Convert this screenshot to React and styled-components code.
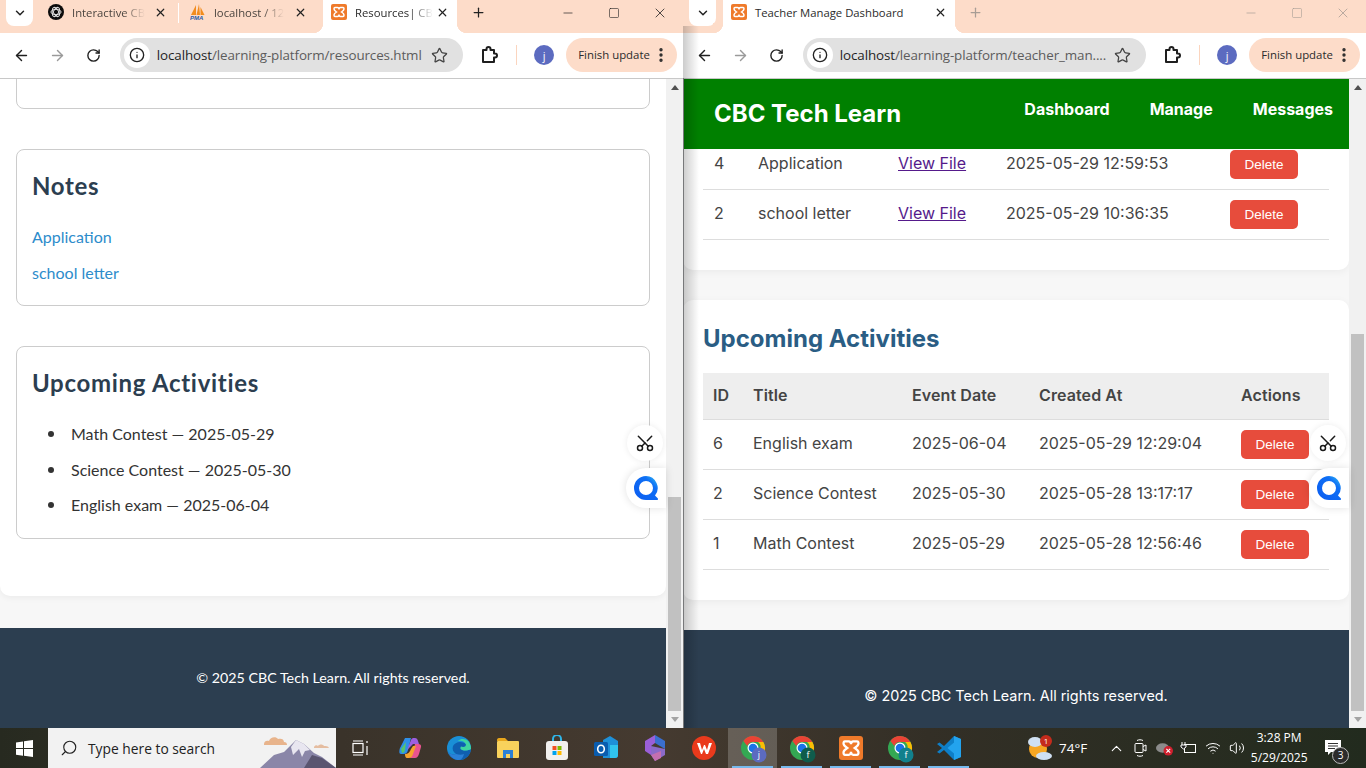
import React from "react";
import styled, { createGlobalStyle } from "styled-components";
import {
  ArrowLeft,
  ArrowRight,
  ChevronDown,
  ChevronUp,
  Info,
  Minus,
  MoreVertical,
  Plus,
  RotateCw,
  Scissors,
  Search,
  Square,
  Star,
  Volume2,
  Wifi,
  X,
} from "lucide-react";

const GlobalStyle = createGlobalStyle`
  html, body {
    margin: 0;
    padding: 0;
    overflow: hidden;
  }
  * {
    box-sizing: border-box;
  }
`;

const Desktop = styled.div`
  width: 1366px;
  height: 768px;
  display: flex;
  flex-direction: column;
  overflow: hidden;
`;

const Windows = styled.div`
  display: flex;
  height: 728px;
`;

const Window = styled.div`
  position: relative;
  width: 683px;
  height: 728px;
  display: flex;
  flex-direction: column;
  background: #fff;

  ${(p) =>
    p.$shaded &&
    `
    &::after {
      content: "";
      position: absolute;
      left: 0;
      top: 26px;
      bottom: 0;
      width: 16px;
      background: linear-gradient(90deg, rgba(0,0,0,.2), rgba(0,0,0,0));
      pointer-events: none;
      z-index: 5;
    }
    &::before {
      content: "";
      position: absolute;
      left: 0;
      top: 78px;
      bottom: 0;
      width: 1px;
      background: #77787a;
      z-index: 6;
    }
  `}
`;

/* browser chrome */
const TabStrip = styled.div`
  height: 33px;
  display: flex;
  align-items: flex-start;
  background: #fddcc9;
  font-family: "Open Sans", "Noto Sans", sans-serif;
  font-size: 11.3px;
  color: #3b3b3b;
`;

const TabMenu = styled.div`
  width: 27px;
  height: 26px;
  margin: 0 7px 0 6px;
  background: #fff;
  border-radius: 0 0 8px 8px;
  display: flex;
  align-items: center;
  justify-content: center;
  color: #222;
`;

const Tab = styled.div`
  position: relative;
  width: ${(p) => p.$width}px;
  height: ${(p) => (p.$active ? 33 : 26)}px;
  padding: 0 8px ${(p) => (p.$active ? 9 : 2)}px 8px;
  display: flex;
  align-items: center;
  background: ${(p) => (p.$active ? "#fff" : "transparent")};
  color: ${(p) => (p.$active ? "#2b2b2b" : "#4a443f")};

  svg {
    flex: none;
  }

  ${(p) =>
    p.$active &&
    `
    &::before, &::after {
      content: "";
      position: absolute;
      bottom: 0;
      width: 10px;
      height: 10px;
    }
    &::before {
      left: -10px;
      background: radial-gradient(circle at 0 0, #fddcc9 10px, #fff 10.5px);
    }
    &::after {
      right: -10px;
      background: radial-gradient(circle at 100% 0, #fddcc9 10px, #fff 10.5px);
    }
  `}
`;

const TabTitle = styled.span`
  flex: none;
  margin: 0 auto 0 8px;
  white-space: nowrap;
  ${(p) =>
    p.$fade &&
    `
    -webkit-mask-image: linear-gradient(90deg, #000 70%, transparent 100%);
    mask-image: linear-gradient(90deg, #000 70%, transparent 100%);
  `}
`;

const TabSeparator = styled.div`
  width: 1px;
  height: 20px;
  margin: 3px 3px 0;
  background: #fff;
`;

const TabGap = styled.div`
  width: ${(p) => p.$width}px;
`;

const NewTab = styled.div`
  width: 18px;
  height: 24px;
  margin-left: ${(p) => p.$gap}px;
  display: flex;
  align-items: center;
  justify-content: center;
  color: ${(p) => (p.$dim ? "#a89d95" : "#222")};
`;

const WindowControls = styled.div`
  margin-left: auto;
  display: flex;
  color: ${(p) => (p.$dim ? "#a89d95" : "#222")};
`;

const WindowControl = styled.div`
  width: 46px;
  height: 25px;
  display: flex;
  align-items: center;
  justify-content: center;
`;

const Toolbar = styled.div`
  height: 46px;
  padding: 5px 6px 6px 4px;
  display: flex;
  align-items: center;
  background: #fff;
  border-bottom: 1px solid #c8c8c8;
  font-family: "Open Sans", "Noto Sans", sans-serif;
`;

const ToolButton = styled.div`
  width: 36px;
  height: 34px;
  display: flex;
  align-items: center;
  justify-content: center;
  color: ${(p) => (p.$dim ? "#9a9a9a" : "#1f1f1f")};
`;

const AddressBar = styled.div`
  width: 344px;
  height: 34px;
  margin: 0 8px;
  padding: 0 15px 0 4px;
  display: flex;
  align-items: center;
  background: #e1e1e1;
  border-radius: 17px;
  font-size: 13.4px;
  color: #5c5c5c;
`;

const SiteInfo = styled.div`
  width: 26px;
  height: 26px;
  margin-right: 7px;
  border-radius: 50%;
  background: #fff;
  display: flex;
  align-items: center;
  justify-content: center;
  color: #222;
`;

const Url = styled.div`
  flex: 1;
  white-space: nowrap;
  letter-spacing: -0.1px;

  b {
    font-weight: 400;
    color: #1f1f1f;
  }
`;

const ToolDivider = styled.div`
  width: 1px;
  height: 20px;
  margin: 0 17px 0 9px;
  background: #fbd5bf;
`;

const Avatar = styled.div`
  width: 20px;
  height: 20px;
  margin-right: 12px;
  border-radius: 50%;
  background: #5c6bc0;
  color: #fff;
  font-size: 11px;
  display: flex;
  align-items: center;
  justify-content: center;
`;

const UpdatePill = styled.div`
  width: 111px;
  height: 34px;
  padding: 0 7px 1px 12px;
  display: flex;
  align-items: center;
  justify-content: space-between;
  border-radius: 17px;
  background: #fddcc9;
  font-size: 11.4px;
  color: #2b2b2b;
  white-space: nowrap;
`;

/* page + scrollbar */
const PageArea = styled.div`
  position: relative;
  flex: 1;
  min-height: 0;
  display: flex;
`;

const Viewport = styled.div`
  flex: 1;
  min-width: 0;
  display: flex;
  flex-direction: column;
  overflow: hidden;
  background: #f7f7f7;
`;

const Scrollbar = styled.div`
  width: 17px;
  padding: 0 2px;
  display: flex;
  flex-direction: column;
  align-items: stretch;
  background: #f1f1f1;
`;

const ScrollArrow = styled.div`
  height: 17px;
  flex: none;
  display: flex;
  align-items: center;
  justify-content: center;

  &::before {
    content: "";
    border-left: 4px solid transparent;
    border-right: 4px solid transparent;
    ${(p) => (p.$down ? "border-top: 5px solid #a3a3a3;" : "border-bottom: 5px solid #505050;")}
  }
`;

const ScrollTrack = styled.div`
  flex: 1;
  display: flex;
  flex-direction: column;
  justify-content: flex-end;
`;

const ScrollThumb = styled.div`
  height: ${(p) => p.$height}px;
  background: #c1c1c1;
`;

const ClipperBubble = styled.div`
  position: absolute;
  top: 346px;
  right: 20px;
  width: 36px;
  height: 36px;
  border-radius: 50%;
  background: #fff;
  box-shadow: 0 0 6px rgba(0, 0, 0, 0.08);
  display: flex;
  align-items: center;
  justify-content: center;
  color: #1a1a1a;
  z-index: 3;
`;

const ClipperIcon = styled(Scissors)`
  transform: rotate(-90deg);
`;

const ChatBubble = styled.div`
  position: absolute;
  top: 389px;
  right: 17px;
  width: 40px;
  height: 40px;
  border-radius: 20px 0 0 20px;
  background: #fff;
  box-shadow: 0 0 8px rgba(0, 0, 0, 0.12);
  display: flex;
  align-items: center;
  justify-content: center;
  z-index: 3;
`;

/* resources page */
const ResourcesMain = styled.div`
  height: 517px;
  margin-bottom: 32px;
  padding: 0 16px;
  flex: none;
  display: flex;
  flex-direction: column;
  gap: 40px;
  background: #fff;
  border-radius: 0 0 10px 10px;
  box-shadow: 0 2px 6px rgba(0, 0, 0, 0.05);
  font-family: "Lato", "Noto Sans", sans-serif;
  font-size: 16px;
  color: #333;
`;

const Panel = styled.section`
  flex: none;
  padding: 20px 15px;
  border: 1px solid #ccc;
  border-radius: 8px;
`;

const ClippedPanel = styled(Panel)`
  height: 50px;
  margin-top: -20px;
`;

const PanelTitle = styled.h2`
  margin: 0 0 23px;
  font-size: 24px;
  line-height: 32px;
  font-weight: 700;
  letter-spacing: 0.7px;
  color: #2c3e50;
`;

const NoteLinks = styled.div`
  display: flex;
  flex-direction: column;
  gap: 12px;
  line-height: 24px;
`;

const NoteLink = styled.a`
  color: #2d8ccb;
  text-decoration: none;
`;

const ActivityList = styled.ul`
  margin: 2px 0 1px;
  padding: 0 0 0 39px;
  display: flex;
  flex-direction: column;
  gap: 11.5px;
  line-height: 24px;
  list-style: none;
`;

const ActivityItem = styled.li`
  position: relative;

  &::before {
    content: "";
    position: absolute;
    left: -23px;
    top: 9px;
    width: 6px;
    height: 6px;
    border-radius: 50%;
    background: #333;
  }
`;

const Footer = styled.footer`
  flex: 1;
  display: flex;
  justify-content: center;
  align-items: ${(p) => (p.$inter ? "flex-start" : "center")};
  margin-top: ${(p) => (p.$inter ? 30 : 0)}px;
  padding-top: ${(p) => (p.$inter ? 56 : 0)}px;
  background: #2c3e50;
  color: #fff;
  font-family: ${(p) => (p.$inter ? '"Inter"' : '"Lato"')}, sans-serif;
  font-size: ${(p) => (p.$inter ? "14.4px" : "14.25px")};
  line-height: 20px;
`;

/* teacher page */
const TeacherPage = styled(Viewport)`
  font-family: "Inter", sans-serif;
  font-size: 16px;
  color: #444;
`;

const Header = styled.header`
  position: relative;
  z-index: 2;
  flex: none;
  height: 70px;
  padding: 0 16px 0 31px;
  display: flex;
  align-items: center;
  justify-content: space-between;
  background: #008000;
  color: #fff;
`;

const Brand = styled.div`
  margin-top: -2px;
  font-size: 24px;
  font-weight: 700;
`;

const Nav = styled.nav`
  display: flex;
  gap: 40px;
  margin-top: -11px;
  font-weight: 700;
`;

const Card = styled.section`
  flex: none;
  padding: ${(p) => p.$top}px 20px 30px;
  margin-top: ${(p) => p.$offset}px;
  background: #fff;
  border-radius: 10px;
  box-shadow: 0 2px 8px rgba(0, 0, 0, 0.05);
`;

const CardTitle = styled.h2`
  margin: 0 0 19px;
  font-size: 24px;
  line-height: 30px;
  font-weight: 700;
  color: #2a5d84;
`;

const Table = styled.table`
  width: 626px;
  table-layout: fixed;
  border-collapse: separate;
  border-spacing: 0;
  white-space: nowrap;
`;

const HeadCell = styled.th`
  height: 47px;
  padding: 0 ${(p) => p.$pad}px 2px;
  text-align: left;
  font-weight: 600;
  letter-spacing: 0.1px;
  background: #eee;
  border-bottom: 1px solid #ddd;
`;

const Cell = styled.td`
  height: 50px;
  padding: 0 ${(p) => p.$pad}px 3px;
  border-bottom: 1px solid #ddd;
  vertical-align: middle;
`;

const FileLink = styled.a`
  color: #551a8b;
  text-decoration: underline;
`;

const DeleteButton = styled.button`
  width: 68px;
  height: 29px;
  margin: 1.5px 0 -1.5px;
  padding: 0;
  border: none;
  border-radius: 5px;
  background: #e74c3c;
  color: #fff;
  font-family: "Liberation Sans", sans-serif;
  font-size: 13.5px;
  display: block;
`;

/* taskbar */
const Taskbar = styled.div`
  height: 40px;
  display: flex;
  align-items: stretch;
  background: linear-gradient(90deg, #272a20 0%, #3a332a 25%, #453a30 48%, #332f26 68%, #222b1e 100%);
  color: #fff;
  font-family: "Open Sans", "Noto Sans", sans-serif;
`;

const StartButton = styled.div`
  width: 48px;
  display: flex;
  align-items: center;
  justify-content: center;
`;

const SearchBox = styled.div`
  width: 288px;
  padding-left: 12px;
  display: flex;
  align-items: center;
  background: #f2f2f2;
  color: #222;
  font-size: 13.8px;
  overflow: hidden;

  span {
    margin-left: 10px;
    white-space: nowrap;
  }
  svg:last-child {
    margin-left: auto;
  }
`;

const SearchGlass = styled(Search)`
  transform: scaleX(-1);
`;

const TaskSlot = styled.div`
  position: relative;
  width: 49px;
  flex: none;
  display: flex;
  align-items: center;
  justify-content: center;
  background: ${(p) => (p.$active ? "rgba(255,255,255,.2)" : "transparent")};

  ${(p) =>
    p.$running &&
    `
    &::after {
      content: "";
      position: absolute;
      left: 4px;
      right: 4px;
      bottom: 0;
      height: 2px;
      background: #76b9ed;
    }
  `}
`;

const TrayArea = styled.div`
  flex: 1;
  display: flex;
  align-items: center;
`;

const Weather = styled.div`
  margin-left: 54px;
  display: flex;
  align-items: center;
  gap: 5px;
  font-size: 13.5px;
`;

const TrayIcons = styled.div`
  margin-left: 21px;
  display: flex;
  align-items: center;
  gap: 7px;
`;

const TrayIcon = styled.div`
  width: 17px;
  display: flex;
  justify-content: center;
`;

const Clock = styled.div`
  width: 64px;
  margin-left: 2px;
  text-align: center;
  font-size: 12px;
  line-height: 20px;
`;

const Notifications = styled.div`
  position: relative;
  margin-left: 7px;
  width: 30px;
  display: flex;
  justify-content: center;
`;

const NotificationBadge = styled.div`
  position: absolute;
  right: -1px;
  bottom: -8px;
  width: 17px;
  height: 17px;
  border-radius: 50%;
  background: #2c2c2c;
  border: 1px solid #bbb;
  font-size: 10px;
  line-height: 15px;
  text-align: center;
`;

const ChromeSvg = styled.svg`
  overflow: visible;
`;

const OpenAiIcon = () => (
  <svg width="16" height="16" viewBox="0 0 16 16">
    <circle cx="8" cy="8" r="8" fill="#0c0c0c" />
    <g fill="none" stroke="#ddd" strokeWidth="1">
      <ellipse cx="8" cy="8" rx="5" ry="2.6" />
      <ellipse cx="8" cy="8" rx="5" ry="2.6" transform="rotate(60 8 8)" />
      <ellipse cx="8" cy="8" rx="5" ry="2.6" transform="rotate(120 8 8)" />
    </g>
  </svg>
);

const PmaIcon = () => (
  <svg width="16" height="16" viewBox="0 0 16 16">
    <path d="M1 11 6 1v10zM6.500 11 9 0l1 11zM10.500 11V3l4 8z" fill="#f28c1e" />
    <text x="0" y="16" fontFamily="Liberation Sans" fontSize="6" fontWeight="700" fontStyle="italic" fill="#2a5aa8">PMA</text>
  </svg>
);

const XamppIcon = ({ size = 16 }) => (
  <svg width={size} height={size} viewBox="0 0 16 16">
    <rect width="16" height="16" rx="2" fill="#ef7a2a" />
    <path
      d="M4 3.500h2.500c1 0 1.500 1 1.500 2 0-1 .5-2 1.500-2H12c.8 0 1 .8 1 1.500S12 7 10.500 8c1.500 1 2.500 2.300 2.500 3s-.2 1.500-1 1.500H9.500c-1 0-1.500-1-1.500-2 0 1-.5 2-1.500 2H4c-.8 0-1-.8-1-1.500S4 9 5.500 8C4 7 3 5.700 3 5s.2-1.500 1-1.500z"
      fill="none"
      stroke="#fff"
      strokeWidth="1.500"
    />
  </svg>
);

const ExtensionIcon = () => (
  <svg width="18" height="18" viewBox="0 0 18 18" fill="none" stroke="#1f1f1f" strokeWidth="2" strokeLinejoin="round">
    <path d="M3 4h3.500V3a2 2 0 0 1 4 0v1H14v3.500h1a2 2 0 0 1 0 4h-1V16H3z" />
  </svg>
);

const ChatRing = ({ id }) => (
  <svg width="24" height="24" viewBox="0 0 24 24">
    <defs>
      <linearGradient id={id} x1="0" y1="1" x2="1" y2="0">
        <stop offset="0" stopColor="#0b5cf0" />
        <stop offset="0.7" stopColor="#0f6ff5" />
        <stop offset="1" stopColor="#35c6f4" />
      </linearGradient>
    </defs>
    <path
      d="M12 0a12 12 0 1 0 0 24h11a1 1 0 0 0 .7-1.700l-2.700-2.800A12 12 0 0 0 12 0zm0 5a7 7 0 1 1 0 14 7 7 0 0 1 0-14z"
      fill={`url(#${id})`}
      fillRule="evenodd"
    />
  </svg>
);

const WindowsLogo = () => (
  <svg width="17" height="17" viewBox="0 0 17 17" fill="#fff">
    <path d="M0 2.400 7 1.400v6.700H0zM8 1.300 17 0v8.100H8zM0 9h7v6.700l-7-1zM8 9h9v8l-9-1.300z" />
  </svg>
);

const SearchArt = () => (
  <svg width="76" height="39" viewBox="0 0 76 39">
    <path d="M4 15c0-3 3-4 5-3 1-4 7-5 9-2 3-1 6 0 6 3 2 0 3 1 3 3H4z" fill="#e8b48c" />
    <path d="M54 18c1-2 3-2 4-1 1-2 5-2 6 0 2 0 4 0 5 2H54z" fill="#e5bda0" />
    <path d="M0 39 14 26l10-3 12-12 8 4 10 9 8 4 14 11z" fill="#8a86a8" />
    <path d="M36 11l8 4 6 6-5 1-3 6-3-8-6 6-2-8z" fill="#e8e6f0" />
    <path d="M44 39l8-13 10 3 14 10z" fill="#5a5570" />
  </svg>
);

const TaskView = () => (
  <svg width="18" height="16" viewBox="0 0 18 16" fill="none" stroke="#fff" strokeWidth="1.200">
    <rect x="1" y="3.500" width="10" height="9" />
    <path d="M1 1h10M1 15h10M15 1v2M15 6v9" />
  </svg>
);

const CopilotIcon = () => (
  <svg width="24" height="24" viewBox="0 0 24 24">
    <path d="M7 2h6l-3 12c-.6 2.500-2 4-4 4H3C1 18 1 15 2 12z" fill="#2f8fe8" />
    <path d="M11 22H17c2 0 3-1.500 4-4l2-7c.6-2-1-3-2.500-3H17l-3 10c-.6 2-1.500 4-3 4z" fill="#e9548f" />
    <path d="M9 14 13 4c.6-1.500 1.500-2 3-2h1c1.500 0 2.500 1 3 3l1 3h-6z" fill="#9c5fe0" />
    <path d="M7 18c3 0 5-2 6-5l2-3h3l-3 8c-.8 2.500-2 4-4 4H9c-1.500 0-2-2-2-4z" fill="#f7a42c" />
    <path d="M3 13 8 6 7 14c-.4 2-1.500 3-3 3z" fill="#58c46c" />
  </svg>
);

const EdgeIcon = () => (
  <svg width="24" height="24" viewBox="0 0 24 24">
    <circle cx="12" cy="12" r="12" fill="#1a8fd6" />
    <path d="M24 13c-.4 6-5 11-12 11-5 0-9-3-11-8 2 2 5 3 8 2-3-2-4-5-3-8 1-2 4-4 7-4 5 0 7 3 7 5 0 2-2 3-4 3 1 1 3 1 8-1z" fill="#0f5fb0" />
    <path d="M24 13c-2 1.500-6 2-9 1-2-.7-2-2-1-3.500 2 1 5 .5 5-2C18 5 14 4 11 5c3-3 8-2 10 0 2 2 3 5 3 8z" fill="#3fd4a0" />
    <path d="M12 24c-4 0-8-2-11-8 2 2 5 3 8 2 3 1 6 1 8 0-1 4-3 6-5 6z" fill="#2a80d8" />
  </svg>
);

const FolderIcon = () => (
  <svg width="24" height="22" viewBox="0 0 24 22">
    <path d="M1 3c0-1 .5-2 2-2h6l3 3H1z" fill="#e8a61c" />
    <rect x="1" y="4" width="22" height="17" rx="1" fill="#f9d25c" />
    <path d="M7 21v-8h10v8h-3v-4h-4v4z" fill="#2b80d4" />
  </svg>
);

const StoreIcon = () => (
  <svg width="24" height="26" viewBox="0 0 24 26">
    <path d="M8 6V4a4 4 0 0 1 8 0v2" fill="none" stroke="#2fb5e8" strokeWidth="2" />
    <rect x="1" y="6" width="22" height="19" rx="3" fill="#f2f0ee" />
    <rect x="7.500" y="11" width="4" height="4" fill="#f25022" />
    <rect x="12.500" y="11" width="4" height="4" fill="#7fba00" />
    <rect x="7.500" y="16" width="4" height="4" fill="#00a4ef" />
    <rect x="12.500" y="16" width="4" height="4" fill="#ffb900" />
  </svg>
);

const OutlookIcon = () => (
  <svg width="24" height="24" viewBox="0 0 24 24">
    <path d="M9 4 16 0l8 5v14c0 2-1 3-3 3H9z" fill="#1e90d8" />
    <path d="M16 9h8v10c0 2-1 3-3 3h-5z" fill="#30c4ee" />
    <rect x="0" y="6" width="14" height="14" rx="1.500" fill="#0a5cae" />
    <ellipse cx="7" cy="13" rx="3.300" ry="3.800" fill="none" stroke="#fff" strokeWidth="1.600" />
  </svg>
);

const Copilot365Icon = () => (
  <svg width="22" height="26" viewBox="0 0 22 26">
    <path d="M11 0 21 6v8L11 8z" fill="#3a6fd0" />
    <path d="M1 6 11 0v8l-4 3v9l-6-4z" fill="#9a5fd8" />
    <path d="M7 11l14 3v6l-10 6-4-6z" fill="#8b6ac9" />
    <path d="M7 20l10-4v7l-6 3z" fill="#c46fb0" />
  </svg>
);

const WpsIcon = () => (
  <svg width="24" height="24" viewBox="0 0 24 24">
    <circle cx="12" cy="12" r="12" fill="#ea3a1c" />
    <path d="M5 7h3l2 7 2-5h1l2 5 2-7h3l-4 11h-2l-2-5-2 5H9z" fill="#fff" />
  </svg>
);

const ChromeIcon = ({ badge, letter }) => (
  <ChromeSvg width="24" height="24" viewBox="0 0 24 24">
    <circle cx="12" cy="12" r="12" fill="#34a853" />
    <path d="M12 0a12 12 0 0 1 10.400 6H12a6 6 0 0 0-5.700 4L2.400 5A12 12 0 0 1 12 0z" fill="#ea4335" />
    <path d="M22.400 6A12 12 0 0 1 12 24l5-8a6 6 0 0 0 0-10z" fill="#fbbc04" />
    <circle cx="12" cy="12" r="5.500" fill="#fff" />
    <circle cx="12" cy="12" r="4.300" fill="#1a73e8" />
    <circle cx="18" cy="19" r="7.500" fill={badge} />
    <text x="18" y="22" fontFamily="Open Sans" fontSize="9" fill="#fff" textAnchor="middle">{letter}</text>
  </ChromeSvg>
);

const VsCodeIcon = () => (
  <svg width="24" height="24" viewBox="0 0 24 24">
    <path d="M17 0 24 3v18l-7 3L7 14l-4.500 3.500L0 16l5-4-5-4 2.500-1.500L7 10z" fill="#0e7fc8" />
    <path d="M17 0 24 3v18l-7 3zM17 6.500 10.500 12l6.500 5.500z" fill="#23a3ee" fillRule="evenodd" />
  </svg>
);

const WeatherIcon = () => (
  <svg width="27" height="26" viewBox="0 0 27 26">
    <circle cx="11" cy="14" r="9" fill="#f6a623" />
    <ellipse cx="8" cy="7" rx="7" ry="5" fill="#cfe0f2" />
    <ellipse cx="17" cy="21" rx="8" ry="4" fill="#cfe0f2" />
    <circle cx="19" cy="6" r="6" fill="#c42b1c" />
    <text x="19" y="9" fontFamily="Open Sans" fontSize="8" fill="#fff" textAnchor="middle">1</text>
  </svg>
);

const MeetIcon = () => (
  <svg width="13" height="20" viewBox="0 0 13 20" fill="none" stroke="#fff" strokeWidth="1">
    <rect x="1" y="5.500" width="8" height="9" rx="1" />
    <path d="M9 8.500l3-1.500v6l-3-1.500M3 2.500c2-1 4-1 6 0M3 17.500c2 1 4 1 6 0" />
  </svg>
);

const CloudError = () => (
  <svg width="18" height="16" viewBox="0 0 18 16">
    <ellipse cx="7" cy="8" rx="7" ry="5" fill="#8b8b8b" />
    <circle cx="13" cy="11" r="5" fill="#d0202e" />
    <path d="M11 9l4 4M15 9l-4 4" stroke="#fff" strokeWidth="1.200" />
  </svg>
);

const BatteryPlug = () => (
  <svg width="17" height="14" viewBox="0 0 17 14" fill="none" stroke="#fff" strokeWidth="1">
    <rect x="4.500" y="3.500" width="11" height="8" />
    <path d="M2 1v3M5 1v3M1 4h5v2L3.500 8 1 6z" fill="#222" />
  </svg>
);

const NotificationIcon = () => (
  <svg width="16" height="16" viewBox="0 0 16 16">
    <path d="M0 0h16v12H6l-3 3v-3H0z" fill="#fff" />
    <path d="M3 3.500h10M3 6h10M3 8.500h7" stroke="#333" strokeWidth="1" />
  </svg>
);

const BrowserChrome = ({ tabs, plusGap, controlsDim, url, host = "localhost" }) => (
  <>
    <TabStrip>
      <TabMenu>
        <ChevronDown size={14} strokeWidth={2.5} />
      </TabMenu>
      {tabs.map((tab) => (
        <React.Fragment key={tab.title}>
          <Tab $width={tab.width} $active={tab.active}>
            {tab.icon}
            <TabTitle $fade={tab.fade}>{tab.title}</TabTitle>
            <X size={13} strokeWidth={2.2} color="#222" />
          </Tab>
          {tab.divider && <TabSeparator />}
          {tab.gap && <TabGap $width={tab.gap} />}
        </React.Fragment>
      ))}
      <NewTab $gap={plusGap} $dim={controlsDim}>
        <Plus size={15} strokeWidth={2} />
      </NewTab>
      <WindowControls $dim={controlsDim}>
        <WindowControl><Minus size={14} strokeWidth={1.2} /></WindowControl>
        <WindowControl><Square size={12} strokeWidth={1.2} /></WindowControl>
        <WindowControl><X size={16} strokeWidth={1.2} /></WindowControl>
      </WindowControls>
    </TabStrip>
    <Toolbar>
      <ToolButton><ArrowLeft size={17} strokeWidth={2} /></ToolButton>
      <ToolButton $dim><ArrowRight size={17} strokeWidth={2} /></ToolButton>
      <ToolButton><RotateCw size={15} strokeWidth={2.2} /></ToolButton>
      <AddressBar>
        <SiteInfo><Info size={16} strokeWidth={2} /></SiteInfo>
        <Url><b>{host}</b>{url}</Url>
        <Star size={17} strokeWidth={1.8} color="#444" />
      </AddressBar>
      <ToolButton><ExtensionIcon /></ToolButton>
      <ToolDivider />
      <Avatar>j</Avatar>
      <UpdatePill>
        Finish update
        <MoreVertical size={18} strokeWidth={2.5} />
      </UpdatePill>
    </Toolbar>
  </>
);

const noteRows = [
  { id: 4, title: "Application", date: "2025-05-29 12:59:53" },
  { id: 2, title: "school letter", date: "2025-05-29 10:36:35" },
];

const activityRows = [
  { id: 6, title: "English exam", event: "2025-06-04", created: "2025-05-29 12:29:04" },
  { id: 2, title: "Science Contest", event: "2025-05-30", created: "2025-05-28 13:17:17" },
  { id: 1, title: "Math Contest", event: "2025-05-29", created: "2025-05-28 12:56:46" },
];

const leftTabs = [
  { title: "Interactive CB", width: 135, icon: <OpenAiIcon />, fade: true, divider: true },
  { title: "localhost / 12", width: 133, icon: <PmaIcon />, fade: true, gap: 8 },
  { title: "Resources| CB", width: 134, icon: <XamppIcon />, fade: true, active: true },
];

const rightTabs = [
  { title: "Teacher Manage Dashboard", width: 232, icon: <XamppIcon />, active: true },
];

const taskApps = [
  { key: "view", icon: <TaskView /> },
  { key: "copilot", icon: <CopilotIcon /> },
  { key: "edge", icon: <EdgeIcon /> },
  { key: "files", icon: <FolderIcon /> },
  { key: "store", icon: <StoreIcon /> },
  { key: "outlook", icon: <OutlookIcon /> },
  { key: "m365", icon: <Copilot365Icon /> },
  { key: "wps", icon: <WpsIcon /> },
  { key: "chrome1", icon: <ChromeIcon badge="#5c6bc0" letter="j" />, running: true, active: true },
  { key: "chrome2", icon: <ChromeIcon badge="#0f5c4c" letter="f" />, running: true },
  { key: "xampp", icon: <XamppIcon size={24} />, running: true },
  { key: "chrome3", icon: <ChromeIcon badge="#11808c" letter="f" />, running: true },
  { key: "code", icon: <VsCodeIcon />, running: true },
];

export default function App() {
  return (
    <Desktop>
      <GlobalStyle />
      <Windows>
        <Window>
          <BrowserChrome tabs={leftTabs} plusGap={12} url="/learning-platform/resources.html" />
          <PageArea>
            <Viewport>
              <ResourcesMain>
                <ClippedPanel />
                <Panel>
                  <PanelTitle>Notes</PanelTitle>
                  <NoteLinks>
                    <NoteLink>Application</NoteLink>
                    <NoteLink>school letter</NoteLink>
                  </NoteLinks>
                </Panel>
                <Panel>
                  <PanelTitle>Upcoming Activities</PanelTitle>
                  <ActivityList>
                    <ActivityItem>Math Contest — 2025-05-29</ActivityItem>
                    <ActivityItem>Science Contest — 2025-05-30</ActivityItem>
                    <ActivityItem>English exam — 2025-06-04</ActivityItem>
                  </ActivityList>
                </Panel>
              </ResourcesMain>
              <Footer>© 2025 CBC Tech Learn. All rights reserved.</Footer>
            </Viewport>
            <Scrollbar>
              <ScrollArrow />
              <ScrollTrack><ScrollThumb $height={214} /></ScrollTrack>
              <ScrollArrow $down />
            </Scrollbar>
            <ClipperBubble><ClipperIcon size={20} strokeWidth={1.8} /></ClipperBubble>
            <ChatBubble><ChatRing id="ring-left" /></ChatBubble>
          </PageArea>
        </Window>
        <Window $shaded>
          <BrowserChrome
            tabs={rightTabs}
            plusGap={11}
            controlsDim
            url="/learning-platform/teacher_man...."
          />
          <PageArea>
            <TeacherPage>
              <Header>
                <Brand>CBC Tech Learn</Brand>
                <Nav>
                  <span>Dashboard</span>
                  <span>Manage</span>
                  <span>Messages</span>
                </Nav>
              </Header>
              <Card $top={0} $offset={-9}>
                <Table>
                  <colgroup>
                    <col width="44" />
                    <col width="140" />
                    <col width="108" />
                    <col width="224" />
                    <col width="110" />
                  </colgroup>
                  <tbody>
                    {noteRows.map((row) => (
                      <tr key={row.id}>
                        <Cell $pad={11}>{row.id}</Cell>
                        <Cell $pad={11}>{row.title}</Cell>
                        <Cell $pad={11}><FileLink href="#">View File</FileLink></Cell>
                        <Cell $pad={11}>{row.date}</Cell>
                        <Cell $pad={11}><DeleteButton>Delete</DeleteButton></Cell>
                      </tr>
                    ))}
                  </tbody>
                </Table>
              </Card>
              <Card $top={24} $offset={30}>
                <CardTitle>Upcoming Activities</CardTitle>
                <Table>
                  <colgroup>
                    <col width="40" />
                    <col width="159" />
                    <col width="127" />
                    <col width="202" />
                    <col width="98" />
                  </colgroup>
                  <thead>
                    <tr>
                      <HeadCell $pad={10}>ID</HeadCell>
                      <HeadCell $pad={10}>Title</HeadCell>
                      <HeadCell $pad={10}>Event Date</HeadCell>
                      <HeadCell $pad={10}>Created At</HeadCell>
                      <HeadCell $pad={10}>Actions</HeadCell>
                    </tr>
                  </thead>
                  <tbody>
                    {activityRows.map((row) => (
                      <tr key={row.id}>
                        <Cell $pad={10}>{row.id}</Cell>
                        <Cell $pad={10}>{row.title}</Cell>
                        <Cell $pad={10}>{row.event}</Cell>
                        <Cell $pad={10}>{row.created}</Cell>
                        <Cell $pad={10}><DeleteButton>Delete</DeleteButton></Cell>
                      </tr>
                    ))}
                  </tbody>
                </Table>
              </Card>
              <Footer $inter>© 2025 CBC Tech Learn. All rights reserved.</Footer>
            </TeacherPage>
            <Scrollbar>
              <ScrollArrow />
              <ScrollTrack><ScrollThumb $height={377} /></ScrollTrack>
              <ScrollArrow $down />
            </Scrollbar>
            <ClipperBubble><ClipperIcon size={20} strokeWidth={1.8} /></ClipperBubble>
            <ChatBubble><ChatRing id="ring-right" /></ChatBubble>
          </PageArea>
        </Window>
      </Windows>
      <Taskbar>
        <StartButton><WindowsLogo /></StartButton>
        <SearchBox>
          <SearchGlass size={18} strokeWidth={1.5} />
          <span>Type here to search</span>
          <SearchArt />
        </SearchBox>
        {taskApps.map((app) => (
          <TaskSlot key={app.key} $running={app.running} $active={app.active}>
            {app.icon}
          </TaskSlot>
        ))}
        <TrayArea>
          <Weather>
            <WeatherIcon />
            74°F
          </Weather>
          <TrayIcons>
            <TrayIcon><ChevronUp size={17} strokeWidth={1.5} /></TrayIcon>
            <TrayIcon><MeetIcon /></TrayIcon>
            <TrayIcon><CloudError /></TrayIcon>
            <TrayIcon><BatteryPlug /></TrayIcon>
            <TrayIcon><Wifi size={16} strokeWidth={1.5} /></TrayIcon>
            <TrayIcon><Volume2 size={16} strokeWidth={1.5} /></TrayIcon>
          </TrayIcons>
          <Clock>
            3:28 PM
            <br />
            5/29/2025
          </Clock>
          <Notifications>
            <NotificationIcon />
            <NotificationBadge>3</NotificationBadge>
          </Notifications>
        </TrayArea>
      </Taskbar>
    </Desktop>
  );
}
